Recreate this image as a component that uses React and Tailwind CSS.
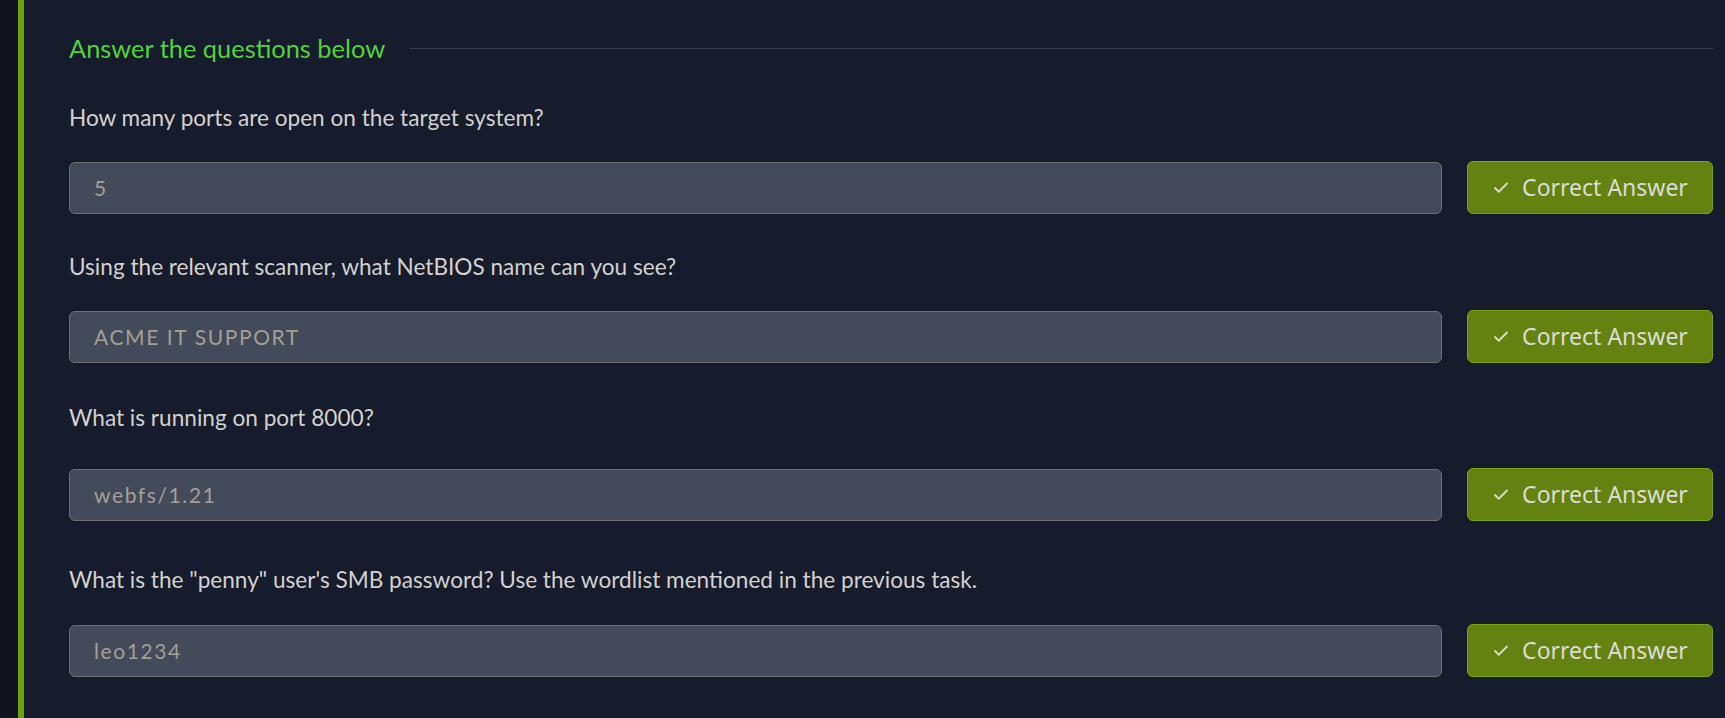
import { Check } from 'lucide-react'

const questions = [
  { q: 'How many ports are open on the target system?', a: '5', mt: 'mt-0', gap: 'mt-[27px]' },
  { q: 'Using the relevant scanner, what NetBIOS name can you see?', a: 'ACME IT SUPPORT', mt: 'mt-[37px]', gap: 'mt-[27px]' },
  { q: 'What is running on port 8000?', a: 'webfs/1.21', mt: 'mt-[39px]', gap: 'mt-[34px]' },
  { q: 'What is the "penny" user\'s SMB password? Use the wordlist mentioned in the previous task.', a: 'leo1234', mt: 'mt-[43px]', gap: 'mt-[28px]' },
]

function QuestionRow({ q, a, mt, gap }) {
  return (
    <div className={`flex flex-col ${mt}`}>
      <p className="text-[22.6px] leading-[32px] text-[#d3d1cd] font-['Lato',sans-serif]">{q}</p>
      <div className={`${gap} flex items-center gap-[25px]`}>
        <div className="flex-1 h-[52px] rounded-[6px] border border-[#73706a] bg-[#434a59] px-[24px] flex items-center">
          <span className="text-[21px] tracking-[1.6px] text-[#a59f93] font-['Lato',sans-serif]">{a}</span>
        </div>
        <button className="w-[246px] h-[53px] rounded-[6px] border border-[#78a314] bg-[#64820f] flex items-center justify-center gap-[12px] text-[#dedbd6] font-['Noto_Sans',sans-serif] text-[23px]">
          <Check size={18} strokeWidth={2.4} />
          <span>Correct Answer</span>
        </button>
      </div>
    </div>
  )
}

export default function App() {
  return (
    <div className="flex h-[718px] w-full overflow-hidden bg-[#171c2c]">
      <div className="w-[18px] bg-[#10131b]" />
      <div className="w-[6px] bg-[#6aa10f]" />
      <div className="flex-1 pl-[45px] pr-[12px] pt-[31px]">
        <div className="flex items-center gap-[25px]">
          <h2 className="text-[25.4px] leading-[34px] text-[#52d13c] font-['Lato',sans-serif]">Answer the questions below</h2>
          <div className="flex-1 h-px bg-[#363d4d]" />
        </div>
        <div className="mt-[37px] flex flex-col">
          {questions.map((item) => (
            <QuestionRow key={item.q} q={item.q} a={item.a} mt={item.mt} gap={item.gap} />
          ))}
        </div>
      </div>
    </div>
  )
}
